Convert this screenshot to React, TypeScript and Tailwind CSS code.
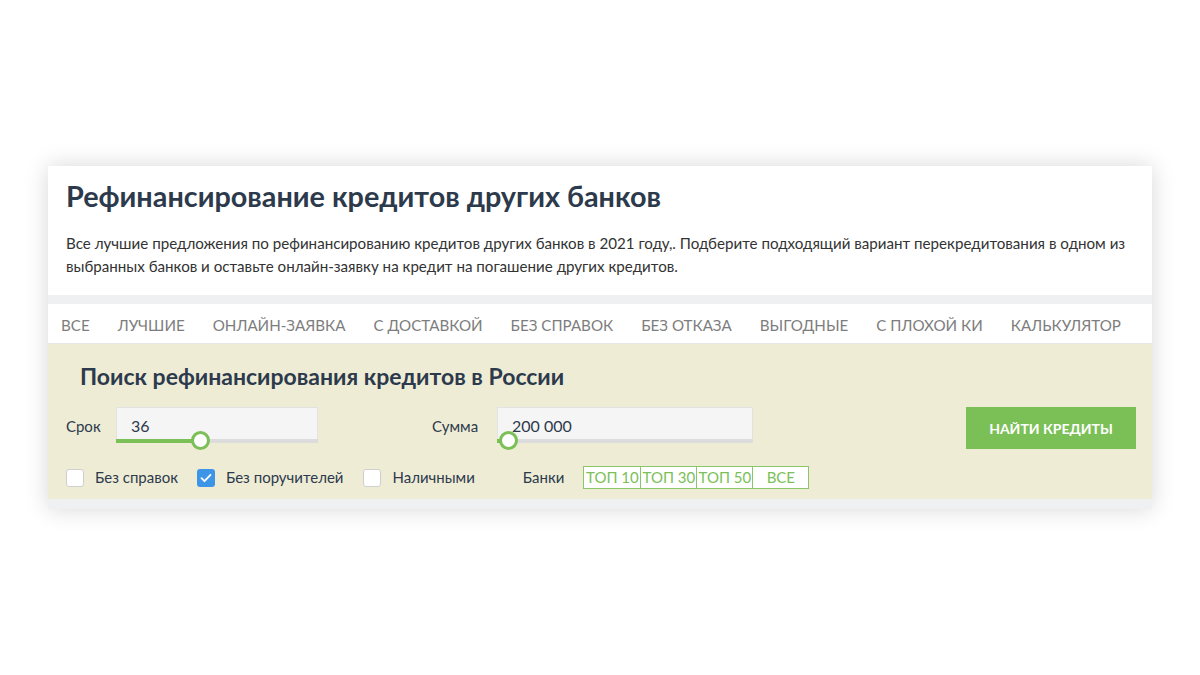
import React from 'react';

const tabs = ['Все', 'Лучшие', 'Онлайн-заявка', 'С доставкой', 'Без справок', 'Без отказа', 'Выгодные', 'С плохой КИ', 'Калькулятор'];
const banks = ['ТОП 10', 'ТОП 30', 'ТОП 50', 'ВСЕ'];

function Slider({ label, value, inputW, fill, labelW }: { label: string; value: string; inputW: string; fill: number; labelW: string }) {
  return (
    <div className="flex items-start">
      <span className={`${labelW} pt-[8px] text-[15px] text-[#2c3a4c]`}>{label}</span>
      <div className={`relative ${inputW}`}>
        <div className="h-[32px] bg-[#f5f5f5] border border-[#e2e2e2] border-b-0 pl-[14px] pt-[4px] flex items-center text-[16px] text-[#2c3a4c]">
          {value}
        </div>
        <div className="h-[4px] bg-[#dcdcdc]">
          <div className="h-full bg-[#7bbf57]" style={{ width: fill }} />
        </div>
        <div
          className="absolute top-[24px] w-[19px] h-[19px] -ml-[9px] rounded-full bg-white border-[3px] border-[#7bbf57]"
          style={{ left: fill }}
        />
      </div>
    </div>
  );
}

function Check({ label, checked }: { label: string; checked?: boolean }) {
  return (
    <label className="flex items-center gap-[11px] text-[15px] text-[#2c3a4c] whitespace-nowrap">
      {checked ? (
        <span className="w-[18px] h-[18px] rounded-[3px] bg-[#3d95e8] flex items-center justify-center">
          <svg width="12" height="10" viewBox="0 0 12 10" fill="none">
            <path d="M1.5 5.2l3 3L10.5 1.8" stroke="white" strokeWidth="1.8" strokeLinecap="round" strokeLinejoin="round" />
          </svg>
        </span>
      ) : (
        <span className="w-[18px] h-[18px] rounded-[3px] bg-white border border-[#cfcfcf]" />
      )}
      {label}
    </label>
  );
}

export default function App() {
  return (
    <div className="w-full h-[675px] bg-white pt-[166px]" style={{ fontFamily: 'Lato, "Open Sans", sans-serif' }}>
      <div className="ml-[48px] w-[1104px] bg-white shadow-[0_0_22px_rgba(0,0,0,0.16)]">
        {/* Header */}
        <div className="px-[18px] pt-[12px] pb-[17px]">
          <h1 className="text-[28.8px] leading-[36px] font-bold text-[#2c3a4c] whitespace-nowrap">Рефинансирование кредитов других банков</h1>
          <p className="mt-[18px] text-[15.15px] leading-[23px] text-[#333]">
            Все лучшие предложения по рефинансированию кредитов других банков в 2021 году,. Подберите подходящий вариант перекредитования в одном из выбранных банков и оставьте онлайн-заявку на кредит на погашение других кредитов.
          </p>
        </div>
        <div className="h-[9px] bg-[#eef0f2]" />

        {/* Tabs */}
        <nav className="h-[40px] flex items-center gap-[28px] px-[13px] pt-[3px] border-b border-[#e6e6e6]">
          {tabs.map(t => (
            <span key={t} className="text-[15.15px] uppercase text-[#7d7d7d] whitespace-nowrap">{t}</span>
          ))}
        </nav>

        {/* Search */}
        <div className="bg-[#efecd6] pl-[18px] pr-[16px] pt-[17px] pb-[10px]">
          <h2 className="pl-[14px] text-[23px] leading-[30px] font-bold text-[#2c3a4c] whitespace-nowrap">Поиск рефинансирования кредитов в России</h2>
          <div className="mt-[16px] flex items-start">
            <Slider label="Срок" value="36" inputW="w-[202px]" fill={84} labelW="w-[50px]" />
            <div className="ml-[114px]">
              <Slider label="Сумма" value="200 000" inputW="w-[256px]" fill={11} labelW="w-[65px]" />
            </div>
            <button className="ml-auto w-[170px] h-[42px] bg-[#7bbf57] text-white text-[14px] font-bold uppercase">
              Найти кредиты
            </button>
          </div>
          <div className="mt-[17px] flex items-center">
            <Check label="Без справок" />
            <div className="ml-[19px]"><Check label="Без поручителей" checked /></div>
            <div className="ml-[20px]"><Check label="Наличными" /></div>
            <span className="ml-[48px] text-[15px] text-[#2c3a4c]">Банки</span>
            <div className="ml-[19px] flex border border-[#8cc66b] bg-white">
              {banks.map((b, i) => (
                <span
                  key={b}
                  className={`w-[56px] h-[21px] flex items-center justify-center text-[15px] text-[#7bbf57] whitespace-nowrap ${i > 0 ? 'border-l border-[#8cc66b]' : ''}`}
                >
                  {b}
                </span>
              ))}
            </div>
          </div>
        </div>
        <div className="h-[10px] bg-[#eef0f2]" />
      </div>
    </div>
  );
}
